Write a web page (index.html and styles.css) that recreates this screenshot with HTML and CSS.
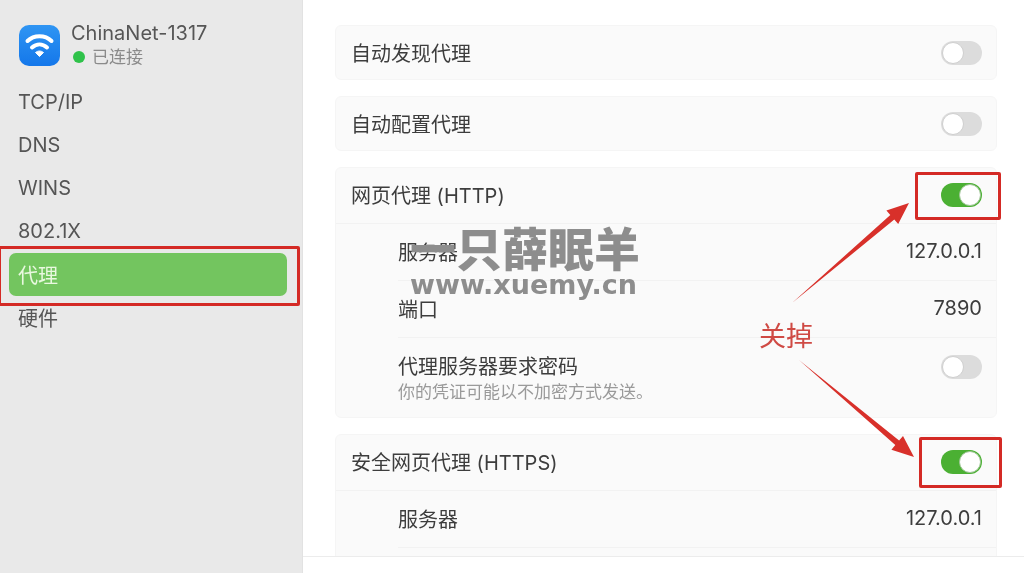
FILE: index.html
```html
<!DOCTYPE html>
<html lang="zh-CN">
<head>
    <meta charset="UTF-8">
    <meta name="viewport" content="width=device-width, initial-scale=1.0">
    <title>ChinaNet-1317 代理</title>
    <link rel="stylesheet" href="styles.css">
</head>
<body>
    <div class="window">
        <aside class="sidebar">
            <div class="network">
                <div class="wifi-icon">
                    <svg viewBox="0 0 41 41" width="41" height="41">
                        <path d="M8.500 16C15 9.500 26 9.500 32.500 16" class="wifi-arc"/>
                        <path d="M13 22.500C17.500 18.500 23.500 18.500 28 22.500" class="wifi-arc"/>
                        <path d="M20.500 31.500L16.500 27.500C19 25.500 22 25.500 24.500 27.500Z" class="wifi-dot"/>
                    </svg>
                </div>
                <div>
                    <div class="network-name">ChinaNet-1317</div>
                    <div class="network-status"><span class="status-dot"></span>已连接</div>
                </div>
            </div>
            <nav class="nav">
                <div class="nav-item">TCP/IP</div>
                <div class="nav-item">DNS</div>
                <div class="nav-item">WINS</div>
                <div class="nav-item">802.1X</div>
                <div class="nav-item cjk active">代理</div>
                <div class="nav-item cjk">硬件</div>
            </nav>
        </aside>

        <main class="content">
            <div class="panel">
                <section class="card">
                    <div class="row top-row"><span>自动发现代理</span><span class="toggle"></span></div>
                </section>
                <section class="card">
                    <div class="row top-row"><span>自动配置代理</span><span class="toggle"></span></div>
                </section>
                <section class="card">
                    <div class="row head-row"><span>网页代理 (HTTP)</span><span class="toggle on"></span></div>
                    <div class="row sub-row"><span>服务器</span><span>127.0.0.1</span></div>
                    <div class="row sub-row"><span>端口</span><span>7890</span></div>
                    <div class="row sub-row tall-row">
                        <div>
                            <div>代理服务器要求密码</div>
                            <div class="hint">你的凭证可能以不加密方式发送。</div>
                        </div>
                        <span class="toggle"></span>
                    </div>
                </section>
                <section class="card clipped">
                    <div class="row head-row"><span>安全网页代理 (HTTPS)</span><span class="toggle on"></span></div>
                    <div class="row sub-row"><span>服务器</span><span>127.0.0.1</span></div>
                </section>
            </div>
            <div class="footer"></div>
        </main>

        <!-- annotations drawn over the screenshot -->
        <div class="mark mark-nav"></div>
        <div class="mark mark-http"></div>
        <div class="mark mark-https"></div>
        <svg class="arrows" viewBox="0 0 1024 573" width="1024" height="573">
            <path d="M792 303L894.300 219.600L898.200 224.100L909 203L886.400 210.500L890.300 215Z" fill="#d8302a"/>
            <path d="M799 360L895.300 445.100L891.400 449.700L914 457L903 435.900L899.100 440.500Z" fill="#d8302a"/>
        </svg>
        <div class="note">关掉</div>
        <div class="watermark">
            <div class="watermark-title">一只薛眠羊</div>
            <div class="watermark-url">www.xuemy.cn</div>
        </div>
    </div>
</body>
</html>
```

FILE: styles.css
```css
/* Page */
body {
    margin: 0;
    background-color: #fff;
    font-family: Inter, "Noto Sans CJK SC", sans-serif;
    color: #3d3d3d;
}

.window {
    position: relative;
    display: flex;
    width: 1024px;
    height: 573px;
    overflow: hidden;
    filter: blur(0.5px);
}

/* Sidebar */
.sidebar {
    width: 303px;
    flex-shrink: 0;
    box-sizing: border-box;
    padding: 21px 15px 0 9px;
    background-color: #e9e9e9;
    border-right: 1px solid #e2e2e2;
}

.network {
    display: flex;
    align-items: center;
    gap: 11px;
    padding-left: 10px;
}

.wifi-icon {
    width: 41px;
    height: 41px;
    border-radius: 10px;
    background: linear-gradient(#2f95f3, #1477ea);
}

.wifi-arc {
    fill: none;
    stroke: #fff;
    stroke-width: 4;
    stroke-linecap: round;
}

.wifi-dot {
    fill: #fff;
    stroke: #fff;
    stroke-width: 1;
    stroke-linejoin: round;
}

.network-name {
    font-size: 20px;
    line-height: 24px;
    color: #565656;
}

.network-status {
    display: flex;
    align-items: center;
    gap: 7px;
    padding-left: 2px;
    font-size: 17px;
    line-height: 24px;
    color: #8a8a8a;
}

.status-dot {
    width: 12px;
    height: 12px;
    border-radius: 50%;
    background-color: #2fc24a;
}

.nav {
    margin-top: 12px;
}

.nav-item {
    height: 43px;
    line-height: 43px;
    padding-left: 9px;
    border-radius: 7px;
    font-size: 20px;
    color: #555;
}

.nav-item.cjk {
    line-height: 46px;
}

.nav-item.active {
    background-color: #73c55f;
    color: #e8f8df;
}

/* Settings panel */
.content {
    flex: 1;
    min-width: 0;
    display: flex;
    flex-direction: column;
}

.panel {
    flex: 1;
    min-height: 0;
    overflow: hidden;
    display: flex;
    flex-direction: column;
    gap: 16px;
    padding: 25px 27px 0 32px;
}

.card {
    flex-shrink: 0;
    border: 1px solid #f5f5f5;
    border-radius: 6px;
    background-color: #fafafa;
    font-size: 20px;
}

.card.clipped {
    padding-bottom: 30px;
}

.row {
    display: flex;
    align-items: center;
    justify-content: space-between;
    padding: 0 14px 0 15px;
}

.top-row {
    height: 53px;
}

.head-row {
    height: 56px;
    box-sizing: border-box;
    padding-bottom: 2px;
    border-bottom: 1px solid #f2f2f2;
}

.sub-row {
    height: 57px;
    box-sizing: border-box;
    margin-left: 62px;
    padding-left: 0;
    padding-bottom: 2px;
    border-bottom: 1px solid #f2f2f2;
}

.tall-row {
    height: 79px;
    padding-top: 17px;
    padding-bottom: 0;
    align-items: flex-start;
    border-bottom: 0;
    line-height: 25px;
}

.hint {
    font-size: 17px;
    line-height: 24px;
    color: #9a9a9a;
}

.toggle {
    position: relative;
    width: 41px;
    height: 24px;
    border-radius: 12px;
    background-color: #dcdcdc;
}

.toggle::after {
    content: "";
    position: absolute;
    top: 1px;
    left: 1px;
    width: 20px;
    height: 20px;
    border: 1px solid #cfcfcf;
    border-radius: 50%;
    background-color: #fff;
}

.toggle.on {
    background-color: #4bb033;
}

.toggle.on::after {
    left: 18px;
    border-color: #9fc596;
}

.footer {
    height: 16px;
    flex-shrink: 0;
    border-top: 1px solid #ececec;
    background-color: #fff;
}

/* Annotations */
.mark {
    position: absolute;
    box-sizing: border-box;
    border: 3px solid #d42a25;
    border-radius: 2px;
}

.mark-nav {
    left: -2px;
    top: 246px;
    width: 302px;
    height: 60px;
}

.mark-http {
    left: 915px;
    top: 172px;
    width: 86px;
    height: 48px;
}

.mark-https {
    left: 919px;
    top: 437px;
    width: 83px;
    height: 51px;
}

.arrows {
    position: absolute;
    left: 0;
    top: 0;
}

.note {
    position: absolute;
    left: 759px;
    top: 318px;
    font-size: 27px;
    line-height: 38px;
    color: #cf4a44;
}

.watermark {
    position: absolute;
    left: 410px;
    top: 226px;
    width: 232px;
    color: #8d8d8d;
    font-weight: 900;
}

.watermark-title {
    font-size: 46px;
    line-height: 46px;
    white-space: nowrap;
}

.watermark-url {
    font-family: "DejaVu Sans", sans-serif;
    font-weight: 700;
    font-size: 27px;
    line-height: 26px;
    white-space: nowrap;
}
```
